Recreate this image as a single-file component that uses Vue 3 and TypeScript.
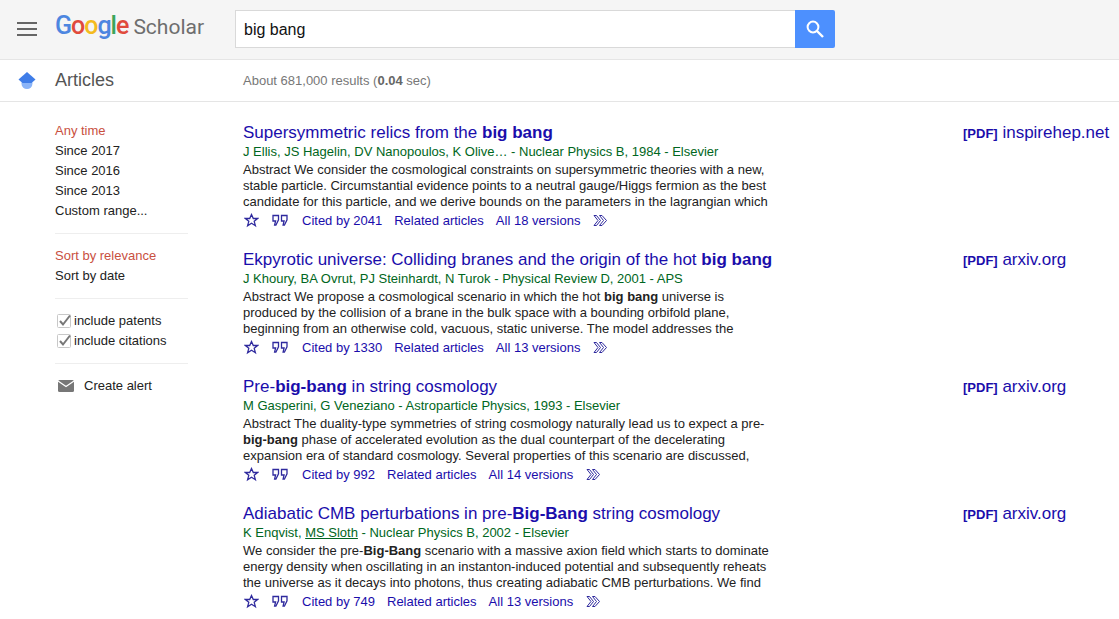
<script setup lang="ts">
interface Part {
  t: string
  b?: boolean
}
interface Result {
  title: Part[]
  meta: Part[]
  body: Part[][]
  cited: string
  versions: string
  source: string
}

const results: Result[] = [
  {
    title: [{ t: 'Supersymmetric relics from the ' }, { t: 'big bang', b: true }],
    meta: [{ t: 'J Ellis, JS Hagelin, DV Nanopoulos, K Olive… - Nuclear Physics B, 1984 - Elsevier' }],
    body: [
      [{ t: 'Abstract We consider the cosmological constraints on supersymmetric theories with a new,' }],
      [{ t: 'stable particle. Circumstantial evidence points to a neutral gauge/Higgs fermion as the best' }],
      [{ t: 'candidate for this particle, and we derive bounds on the parameters in the lagrangian which' }],
    ],
    cited: 'Cited by 2041',
    versions: 'All 18 versions',
    source: 'inspirehep.net',
  },
  {
    title: [{ t: 'Ekpyrotic universe: Colliding branes and the origin of the hot ' }, { t: 'big bang', b: true }],
    meta: [{ t: 'J Khoury, BA Ovrut, PJ Steinhardt, N Turok - Physical Review D, 2001 - APS' }],
    body: [
      [{ t: 'Abstract We propose a cosmological scenario in which the hot ' }, { t: 'big bang', b: true }, { t: ' universe is' }],
      [{ t: 'produced by the collision of a brane in the bulk space with a bounding orbifold plane,' }],
      [{ t: 'beginning from an otherwise cold, vacuous, static universe. The model addresses the' }],
    ],
    cited: 'Cited by 1330',
    versions: 'All 13 versions',
    source: 'arxiv.org',
  },
  {
    title: [{ t: 'Pre-' }, { t: 'big-bang', b: true }, { t: ' in string cosmology' }],
    meta: [{ t: 'M Gasperini, G Veneziano - Astroparticle Physics, 1993 - Elsevier' }],
    body: [
      [{ t: 'Abstract The duality-type symmetries of string cosmology naturally lead us to expect a pre-' }],
      [{ t: 'big-bang', b: true }, { t: ' phase of accelerated evolution as the dual counterpart of the decelerating' }],
      [{ t: 'expansion era of standard cosmology. Several properties of this scenario are discussed,' }],
    ],
    cited: 'Cited by 992',
    versions: 'All 14 versions',
    source: 'arxiv.org',
  },
  {
    title: [{ t: 'Adiabatic CMB perturbations in pre-' }, { t: 'Big-Bang', b: true }, { t: ' string cosmology' }],
    meta: [{ t: 'K Enqvist, ' }, { t: 'MS Sloth', b: true }, { t: ' - Nuclear Physics B, 2002 - Elsevier' }],
    body: [
      [{ t: 'We consider the pre-' }, { t: 'Big-Bang', b: true }, { t: ' scenario with a massive axion field which starts to dominate' }],
      [{ t: 'energy density when oscillating in an instanton-induced potential and subsequently reheats' }],
      [{ t: 'the universe as it decays into photons, thus creating adiabatic CMB perturbations. We find' }],
    ],
    cited: 'Cited by 749',
    versions: 'All 13 versions',
    source: 'arxiv.org',
  },
]

const googleLetters = [
  { c: 'G', color: '#4d86e0' },
  { c: 'o', color: '#e04a3c' },
  { c: 'o', color: '#f4bb1e' },
  { c: 'g', color: '#4d86e0' },
  { c: 'l', color: '#3ba55a' },
  { c: 'e', color: '#e04a3c' },
]
</script>

<template>
  <div class="page">
    <header class="top">
      <svg class="burger" width="20" height="14" viewBox="0 0 20 14">
        <path d="M0 1h20M0 7h20M0 13h20" stroke="#666" stroke-width="2" fill="none" />
      </svg>
      <div class="logo">
        <span class="google"><span v-for="(l, i) in googleLetters" :key="i" :style="{ color: l.color }">{{ l.c }}</span></span>
        <span class="scholar">Scholar</span>
      </div>
      <div class="search">
        <div class="search-input">big bang</div>
        <button class="search-btn" type="button" aria-label="Search">
          <svg width="20" height="20" viewBox="0 0 20 20">
            <circle cx="8" cy="8" r="5.400" fill="none" stroke="#fff" stroke-width="2" />
            <path d="M12 12l6 6" stroke="#fff" stroke-width="2.400" fill="none" />
          </svg>
        </button>
      </div>
    </header>

    <div class="subbar">
      <svg class="cap" width="20" height="20" viewBox="0 0 20 20">
        <circle cx="10" cy="12.500" r="5.500" fill="#8ab4f8" />
        <path d="M10 1l8.500 7.500L14.500 12h-9L1.500 8.500z" fill="#3f7de8" />
      </svg>
      <span class="articles">Articles</span>
      <span class="stats">About 681,000 results (<b>0.04</b> sec)</span>
    </div>

    <main class="body">
      <aside class="side">
        <ul class="group">
          <li class="active">Any time</li>
          <li>Since 2017</li>
          <li>Since 2016</li>
          <li>Since 2013</li>
          <li>Custom range...</li>
        </ul>
        <ul class="group">
          <li class="active">Sort by relevance</li>
          <li>Sort by date</li>
        </ul>
        <ul class="group">
          <li v-for="label in ['include patents', 'include citations']" :key="label" class="check">
            <svg width="14" height="14" viewBox="0 0 14 14">
              <rect x=".5" y=".5" width="13" height="13" rx="1" fill="#fff" stroke="#c8c8c8" />
              <path d="M3 7l3 3.500L13 1.500" fill="none" stroke="#777" stroke-width="2" />
            </svg>
            {{ label }}
          </li>
        </ul>
        <div class="alert">
          <svg width="16" height="12" viewBox="0 0 16 12">
            <rect width="16" height="12" rx="1.500" fill="#777" />
            <path d="M0 1l8 5.500L16 1" fill="none" stroke="#fff" stroke-width="1.200" />
          </svg>
          Create alert
        </div>
      </aside>

      <section class="results">
        <article v-for="r in results" :key="r.title[0].t" class="result">
          <div class="main">
            <h3 class="title"><template v-for="(p, i) in r.title" :key="i"><b v-if="p.b">{{ p.t }}</b><template v-else>{{ p.t }}</template></template></h3>
            <div class="meta"><template v-for="(p, i) in r.meta" :key="i"><u v-if="p.b">{{ p.t }}</u><template v-else>{{ p.t }}</template></template></div>
            <div class="snippet">
              <div v-for="(line, n) in r.body" :key="n" class="line"><template v-for="(p, i) in line" :key="i"><b v-if="p.b">{{ p.t }}</b><template v-else>{{ p.t }}</template></template></div>
            </div>
            <div class="actions">
              <svg class="star" width="15" height="15" viewBox="0 0 15 15">
                <path d="M7.500 1.500l1.800 4h4.300l-3.400 2.800 1.200 4.400-3.900-2.500-3.900 2.500 1.200-4.400L1.400 5.500h4.300z" fill="none" stroke="#2f2a9e" stroke-width="1.300" />
              </svg>
              <svg class="quote" width="16" height="13" viewBox="0 0 16 13">
                <path d="M1 1.500h5.500v4.300l-2.600 5.400H2.600l1-4.200H1zM9.500 1.500H15v4.300l-2.600 5.400h-1.300l1-4.200H9.500z" fill="none" stroke="#2f2a9e" stroke-width="1.300" />
              </svg>
              <span class="link cited">{{ r.cited }}</span>
              <span class="link">Related articles</span>
              <span class="link tight">{{ r.versions }}</span>
              <svg class="more" width="15" height="13" viewBox="0 0 15 13">
                <path d="M1 1.500h2.500l4 5-4 5H1l4-5zM6.500 1.500H9l4.500 5-4.500 5H6.500l4-5z" fill="none" stroke="#2f2a9e" stroke-width="1" />
              </svg>
            </div>
          </div>
          <div class="source"><span class="pdf">[PDF]</span> {{ r.source }}</div>
        </article>
      </section>
    </main>
  </div>
</template>

<style>
body {
  margin: 0;
  background: #fff;
}
</style>

<style scoped>
.page {
  width: 1119px;
  height: 619px;
  overflow: hidden;
  font-family: "Liberation Sans", Arial, sans-serif;
  font-size: 13px;
  color: #222;
}
.top {
  height: 59px;
  background: #f5f5f5;
  border-bottom: 1px solid #e5e5e5;
  display: flex;
  align-items: center;
}
.burger {
  margin-left: 17px;
  margin-bottom: 2px;
}
.logo {
  width: 180px;
  margin-left: 18px;
  margin-bottom: 8px;
  display: flex;
  align-items: baseline;
  gap: 5px;
}
.google {
  font-family: Roboto, sans-serif;
  font-size: 25px;
  letter-spacing: -1px;
  font-weight: 500;
}
.scholar {
  font-family: Roboto, sans-serif;
  font-size: 21px;
  color: #6e6e6e;
}
.search {
  display: flex;
  margin-bottom: 1px;
}
.search-input {
  width: 551px;
  height: 36px;
  line-height: 37px;
  padding-left: 8px;
  background: #fff;
  border: 1px solid #d9d9d9;
  border-right: none;
  font-size: 16px;
  color: #111;
}
.search-btn {
  width: 40px;
  height: 38px;
  padding: 0;
  border: none;
  border-radius: 0 2px 2px 0;
  background: #4d90fe;
  display: flex;
  align-items: center;
  justify-content: center;
}
.subbar {
  height: 41px;
  border-bottom: 1px solid #e5e5e5;
  display: flex;
  align-items: center;
}
.cap {
  margin-left: 17px;
}
.articles {
  margin-left: 18px;
  width: 188px;
  font-size: 18px;
  color: #555;
}
.stats {
  color: #777;
  font-size: 13px;
}
.stats b {
  color: #666;
}
.body {
  display: flex;
}
.side {
  width: 243px;
  flex: none;
  box-sizing: border-box;
  padding: 19px 55px 0 55px;
}
.group {
  list-style: none;
  margin: 0 0 12px;
  padding: 0 0 12px;
  border-bottom: 1px solid #eee;
  line-height: 20px;
  font-size: 13px;
}
.active {
  color: #c9503f;
}
.check {
  display: flex;
  align-items: center;
  gap: 3px;
  margin-left: 2px;
}
.alert {
  display: flex;
  align-items: center;
  gap: 10px;
  margin-left: 3px;
  font-size: 13px;
  line-height: 20px;
}
.results {
  flex: 1;
}
.result {
  display: flex;
  height: 127px;
}
.main {
  width: 720px;
  padding-top: 21px;
}
.title {
  margin: 0;
  font-size: 17px;
  line-height: 20px;
  font-weight: 400;
  color: #1a0dab;
}
.meta {
  color: #006621;
  line-height: 17px;
  font-size: 13px;
}
.snippet {
  margin-top: 2px;
  line-height: 16px;
  font-size: 13px;
}
.actions {
  display: flex;
  align-items: center;
  height: 20px;
  color: #1a0dab;
  font-size: 13px;
}
.star {
  margin-left: 1px;
}
.quote {
  margin-left: 13px;
}
.link {
  margin-left: 13px;
}
.cited {
  margin-left: 14px;
  margin-right: -1px;
}
.tight {
  margin-left: 12px;
}
.more {
  margin-left: 13px;
}
.source {
  padding-top: 21px;
  font-size: 17px;
  line-height: 20px;
  color: #1a0dab;
}
.pdf {
  font-size: 13px;
  font-weight: 700;
}
</style>
